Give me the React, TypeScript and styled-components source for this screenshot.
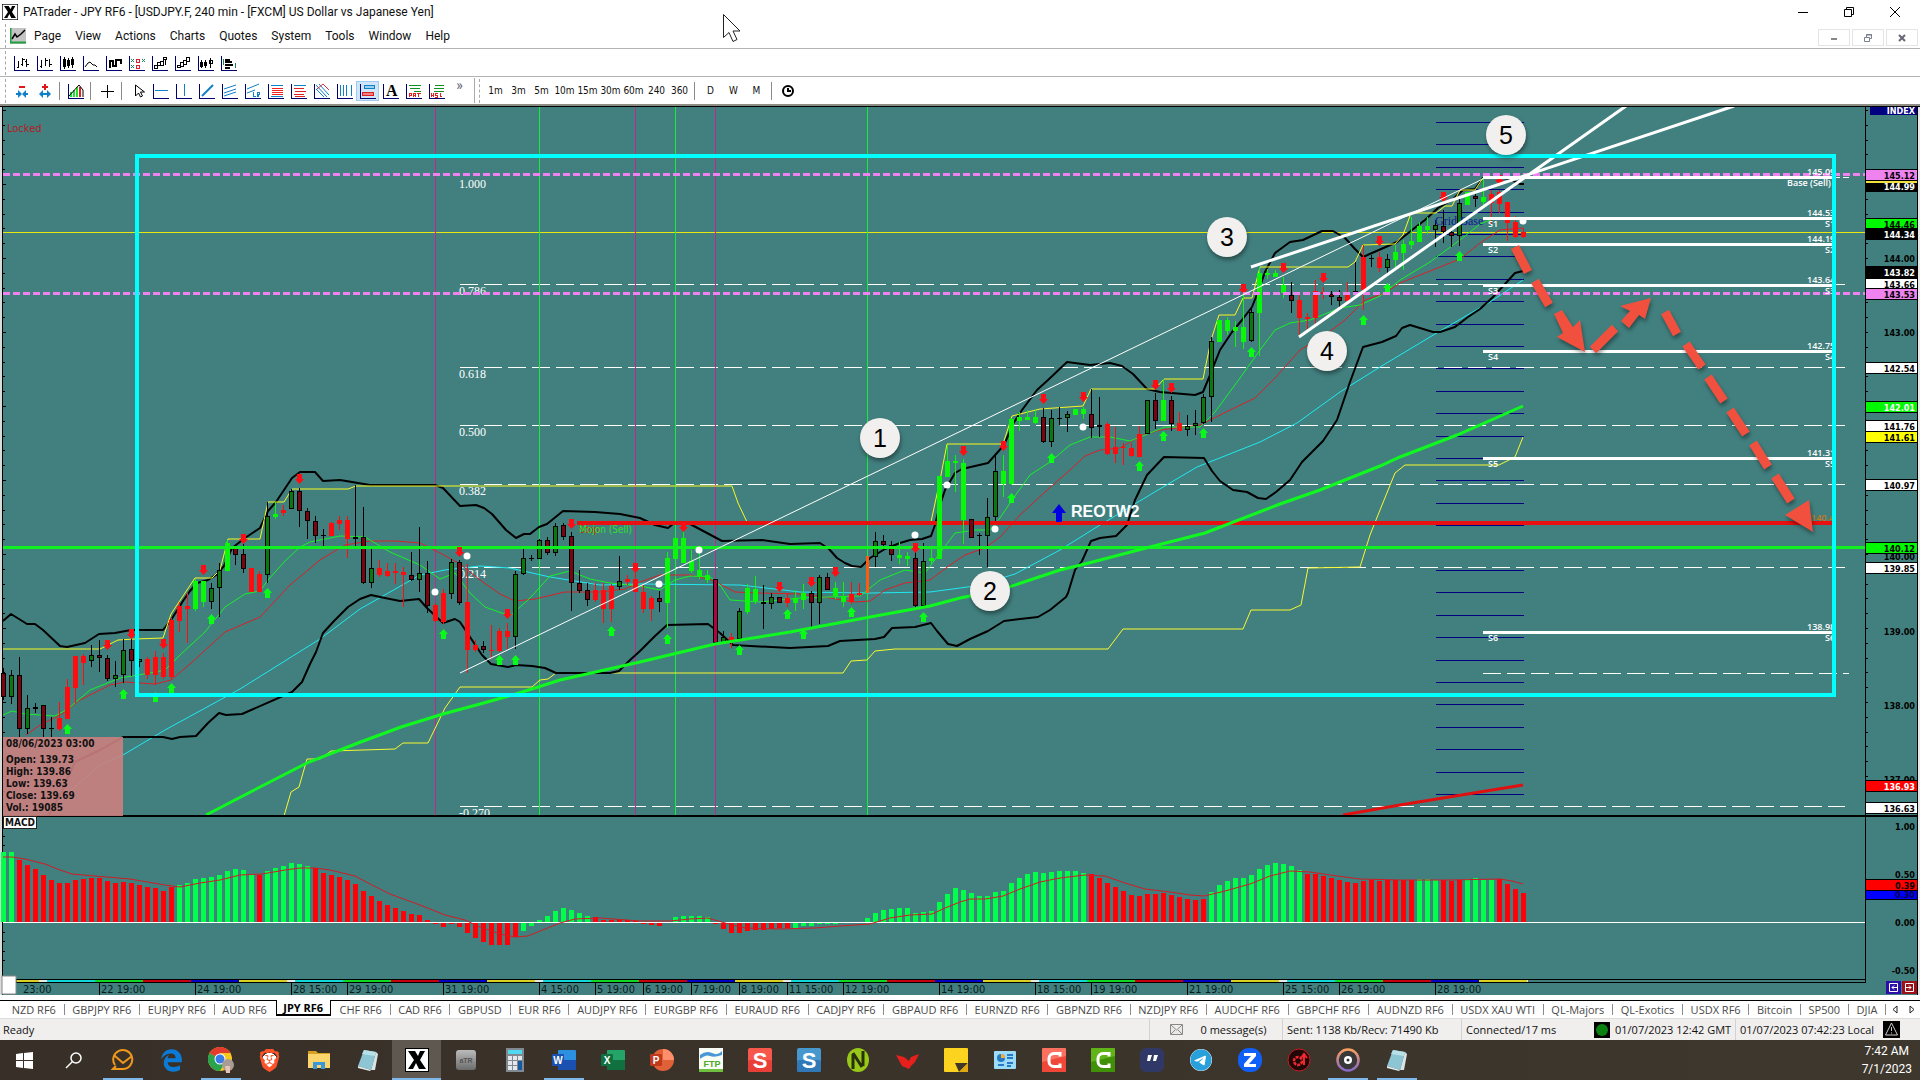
import React from "react";
import styled, { createGlobalStyle } from "styled-components";
import { FaEdgeLegacy, FaTelegram } from "react-icons/fa6";
import { SiBrave } from "react-icons/si";

const UI = `Roboto, "Open Sans", sans-serif`;
const NARROW = `"Open Sans", "Noto Sans", sans-serif`;
const CHART = `"DejaVu Sans Condensed", "DejaVu Sans", sans-serif`;
const TEAL = "#42807f";

const GlobalStyle = createGlobalStyle`
  * { box-sizing: border-box; }
  html, body { margin: 0; padding: 0; background: #fff; }
  body { font-family: ${UI}; font-size: 12px; color: #111; overflow: hidden; }
  button { font: inherit; color: inherit; background: none; border: 0; padding: 0; }
  svg { display: block; }
`;

/* ---------- layout ---------- */
const Screen = styled.div`
  display: flex;
  flex-direction: column;
  min-height: 100vh;
  background: #fff;
`;
const TitleBar = styled.header`
  display: flex;
  align-items: center;
  height: 24px;
  padding-left: 2px;
`;
const Title = styled.h1`
  flex: 1;
  margin: 0 0 0 5px;
  font-size: 12px;
  line-height: 24px;
  font-weight: 400;
`;
const WindowButtons = styled.div`
  display: flex;
  padding-right: 2px;
`;
const WindowButton = styled.button`
  display: grid;
  place-items: center;
  width: 46px;
  height: 20px;
`;
const MenuBar = styled.nav`
  display: flex;
  align-items: center;
  height: 24px;
  padding-left: 5px;
`;
const MenuIcon = styled.svg`
  flex: none;
  margin-right: 1px;
`;
const MenuItem = styled.button`
  padding: 0 7px;
  line-height: 22px;
`;
const Spacer = styled.div`
  flex: 1;
`;
const ChildButton = styled.button`
  display: grid;
  place-items: center;
  width: 32px;
  height: 17px;
  margin: 3px 2px 0 0;
  border: 1px solid #e4e4e4;
`;
const ToolBar = styled.div<{ $last?: boolean }>`
  display: flex;
  align-items: center;
  height: ${(p) => (p.$last ? 30 : 28)}px;
  padding-left: 5px;
  border-top: 1px solid #b4b4b4;
  border-bottom: ${(p) => (p.$last ? "2px solid #8d8d86" : "0")};
`;
const Grip = styled.span`
  width: 0;
  height: 24px;
  margin-right: 4px;
  border-left: 1px dashed #a8a8a8;
`;
const Tool = styled.button<{ $on?: boolean }>`
  display: grid;
  place-items: center;
  width: 23px;
  height: 20px;
  background: ${(p) => (p.$on ? "#cfe6fa" : "transparent")};
  outline: ${(p) => (p.$on ? "1px solid #9fcbf0" : "0")};
  outline-offset: -1px;
`;
const Period = styled(Tool)`
  font-family: ${CHART};
  font-size: 10px;
  white-space: nowrap;
`;
const Divider = styled.span`
  width: 1px;
  height: 18px;
  margin: 0 4px 0 3px;
  background: #8a8a8a;
`;
const More = styled(Tool)`
  height: 24px;
  place-items: start center;
  color: #667;
  font-size: 14px;
  line-height: 12px;
`;
const ToolEnd = styled.span`
  width: 1px;
  height: 25px;
  margin: 0 4px 0 3px;
  background: #aaa;
`;
const ChartRow = styled.main`
  display: flex;
  background: ${TEAL};
  border-top: 1px solid #000;
`;
const Panes = styled.div`
  position: relative;
  flex: 1;
  min-width: 0;
  overflow: hidden;
`;
const AxisColumn = styled.div`
  flex: none;
  width: 55px;
`;
const InfoBox = styled.dl`
  position: absolute;
  left: 3px;
  top: 630px;
  width: 120px;
  height: 79px;
  margin: 0;
  padding: 1px 3px;
  background: rgba(204, 128, 128, 0.9);
  font: bold 10px/12px ${CHART};
  white-space: nowrap;
`;
const InfoDate = styled.dt`
  margin-bottom: 4px;
`;
const InfoLine = styled.dd`
  margin: 0;
`;
const MacdTag = styled.span`
  position: absolute;
  left: 3px;
  top: 709px;
  height: 13px;
  padding: 0 1px;
  background: #fff;
  border: 1px solid #222;
  font: bold 10px/11px ${CHART};
`;
const TabBar = styled.nav`
  display: flex;
  height: 18px;
  margin-top: 5px;
  border-top: 1px solid #000;
  color: #4a4a4a;
  font-family: ${NARROW};
  font-size: 11px;
  padding: 0 0 0 4px;
`;
const Tab = styled.button<{ $on?: boolean }>`
  display: flex;
  flex: 1 1 auto;
  align-items: center;
  justify-content: center;
  height: 16px;
  margin-top: ${(p) => (p.$on ? "-1px" : "0")};
  white-space: nowrap;
  font-weight: ${(p) => (p.$on ? 700 : 400)};
  color: ${(p) => (p.$on ? "#000" : "#4a4a4a")};
  background: #fff;
  border: 1px solid transparent;
  border-width: 0 1px;
  ${(p) => p.$on && "border-color: #000; border-bottom: 2px solid #000;"}
`;
const TabRule = styled.span<{ $hide?: boolean }>`
  width: 1px;
  height: 11px;
  margin-top: 3px;
  background: ${(p) => (p.$hide ? "transparent" : "#8a8a8a")};
`;
const TabScroll = styled.button`
  display: grid;
  place-items: center;
  width: 17px;
  height: 17px;
`;
const StatusBar = styled.footer`
  display: flex;
  align-items: stretch;
  height: 22px;
  background: #f0efee;
  border-top: 1px solid #dcdcdc;
  font-family: ${NARROW};
  font-size: 11px;
  line-height: 22px;
`;
const StatusCell = styled.div<{ $w?: number; $center?: boolean; $plain?: boolean }>`
  display: flex;
  align-items: center;
  justify-content: ${(p) => (p.$center ? "center" : "flex-start")};
  gap: 18px;
  ${(p) => (p.$w ? `width: ${p.$w}px;` : "flex: 1;")}
  padding-left: ${(p) => (p.$plain ? 2 : 4)}px;
  white-space: nowrap;
  border-left: 1px solid ${(p) => (p.$plain ? "transparent" : "#d2d2d2")};
`;
const TaskBar = styled.footer`
  display: flex;
  height: 40px;
  background: linear-gradient(90deg, #383028, #3e372d);
  color: #fff;
`;
const Task = styled.button<{ $open?: boolean; $active?: boolean }>`
  position: relative;
  display: grid;
  place-items: center;
  width: 49px;
  height: 40px;
  background: ${(p) => (p.$active ? "#5f5851" : "transparent")};
  &::after {
    content: "";
    position: absolute;
    left: ${(p) => (p.$active ? 0 : 5)}px;
    right: ${(p) => (p.$active ? 0 : 4)}px;
    bottom: 0;
    height: ${(p) => (p.$open || p.$active ? 2 : 0)}px;
    background: #7fb8ea;
  }
`;
const Clock = styled.time`
  display: flex;
  flex-direction: column;
  align-items: center;
  margin-left: auto;
  padding: 2px 8px 0 0;
  line-height: 18px;
`;

/* ---------- market data ----------
   One row per bar: kind, high, body top, body bottom, low (plot pixels).
   R/G solid trend bars, M/D/C outlined bars, O narrow signal bar. */
const CANDLES = `M 668 673 697 700|D 670 675 697 704|M 657 675 729 737|D 695 708 729 734|M 703 707 709 713|M 705 705 729 737|M 717 728 729 737|R 702 718 729 731|R 679 687 719 719|R 656 656 688 703|R 654 656 663 685|D 645 655 661 667|M 640 655 658 672|M 655 658 679 681|D 661 675 679 687|D 639 650 675 683|M 639 649 661 676|D 659 659 662 667|R 657 659 675 679|R 651 657 675 685|R 653 657 677 679|R 618 620 677 679|R 602 606 621 632|R 593 606 609 643|G 579 581 609 611|G 581 581 602 607|D 583 588 602 609|D 563 570 588 617|G 540 543 571 571|M 546 546 555 565|M 544 554 569 573|R 568 568 592 592|R 571 574 592 592|D 502 516 575 583|G 502 514 517 519|R 505 510 513 516|D 489 491 509 509|M 488 491 511 527|M 508 511 521 539|M 516 521 536 543|M 529 535 536 547|R 522 523 536 536|R 516 520 524 530|R 516 520 539 558|M 485 537 539 546|M 507 537 583 584|D 546 568 583 588|R 560 568 575 577|R 563 571 576 577|R 563 571 573 584|R 567 572 575 607|M 552 575 580 581|D 527 573 580 592|M 561 573 606 613|R 603 605 621 622|R 589 593 622 624|D 559 562 594 599|M 560 562 603 605|R 564 602 650 673|R 640 645 650 652|M 641 646 650 653|R 625 650 651 659|R 628 631 651 652|R 623 631 637 649|D 571 574 637 649|D 549 558 574 575|M 555 558 559 561|D 539 540 559 559|M 537 540 553 555|D 523 526 553 556|M 523 525 537 540|M 532 536 583 611|M 570 583 591 593|M 583 590 600 606|R 583 590 600 602|R 583 590 609 623|R 584 586 609 622|D 556 581 587 590|R 575 579 582 585|R 569 579 592 592|R 585 592 609 613|R 596 598 609 621|M 591 598 602 612|G 552 558 603 628|G 538 538 559 559|G 531 538 563 563|G 550 561 571 573|G 550 570 577 579|G 570 575 580 583|C 579 579 643 643|D 631 637 643 644|R 633 637 640 648|D 608 611 639 640|G 584 588 612 614|G 576 589 601 604|M 585 602 604 629|D 593 597 604 609|M 597 597 603 603|R 593 598 603 607|G 590 598 603 611|G 584 593 600 609|M 591 593 603 627|D 575 577 603 624|M 573 577 590 590|G 582 588 596 599|G 582 596 602 607|R 582 594 602 604|R 583 593 595 596|O 556 556 593 593|D 532 541 557 567|M 535 541 545 546|M 541 545 555 561|G 542 555 558 564|G 552 556 559 566|M 550 558 606 610|D 543 561 606 607|G 549 558 561 565|G 476 476 559 559|G 445 461 477 477|G 455 461 463 492|G 459 463 520 544|M 519 519 538 538|M 533 535 536 555|D 498 517 536 567|D 455 471 517 521|G 455 471 484 497|G 418 419 484 485|G 412 417 421 431|G 410 417 420 420|G 410 417 423 424|M 408 417 442 443|D 410 418 442 447|M 407 418 419 425|D 411 414 418 432|G 409 409 415 415|G 407 409 414 419|M 389 414 428 438|D 397 425 427 437|R 422 424 454 455|R 427 447 454 463|R 443 447 448 465|R 443 448 456 457|R 426 434 457 457|D 400 400 434 434|M 393 400 421 429|G 379 400 421 421|M 396 400 424 431|R 412 423 431 431|D 415 426 430 436|D 410 423 426 435|D 394 397 423 424|D 337 341 397 422|G 320 320 342 342|G 317 320 331 335|G 321 327 331 347|G 293 327 342 349|D 307 312 341 342|G 267 273 313 356|G 269 273 275 279|G 270 273 277 277|G 277 285 293 298|M 282 295 301 313|R 293 300 318 337|R 313 317 319 330|R 280 291 318 324|R 287 292 294 299|M 291 294 297 305|M 290 297 301 307|R 282 292 301 302|M 262 291 293 295|R 245 257 290 310|M 255 258 259 267|R 252 257 268 272|D 254 259 268 273|G 245 252 260 267|G 240 244 253 270|G 217 241 245 249|G 222 226 242 242|G 217 226 230 234|D 220 225 230 247|M 210 226 232 243|M 227 232 236 247|D 197 203 236 246|G 192 192 205 205|M 193 196 199 207|G 177 197 202 205|R 190 194 203 225|R 190 192 204 213|R 202 202 223 241|R 216 222 237 238|R 228 232 237 238`
  .split("|")
  .map((row) => {
    const [kind, ...n] = row.split(" ");
    return { kind, v: n.map(Number) };
  });

const CANDLE_FILL: Record<string, string> = {
  R: "#ff0c10", G: "#08f808", M: "#7c0410", D: "#0a7a10", O: "#ff5a10", C: "#b00440",
};

/* MACD histogram, height in thirds of a pixel above the zero line; "r"/"g" switches colour. */
const MACD = `g 211 209 r 187 172 160 142 127 117 117 127 130 133 133 124 118 120 118 112 106 103 94 104 g 112 118 130 133 136 142 154 160 157 145 r 142 g 154 163 169 178 175 169 r 163 148 142 136 127 115 94 79 64 52 43 34 25 22 7 -7 -14 -5 -14 -32 -47 -59 -68 -68 -68 -46 g -28 -11 7 19 34 43 37 28 19 r 14 7 7 7 7 4 -5 -8 -11 -2 g 16 19 19 19 16 r -5 -20 -32 -32 -26 -23 -23 -20 -18 -18 g -17 -11 -11 -5 -5 -5 -3 -3 -2 13 28 37 40 43 43 28 29 34 61 85 103 97 88 79 79 91 94 118 133 145 151 148 151 154 154 154 148 r 145 133 118 106 94 82 79 85 85 88 82 76 70 67 70 g 91 112 124 133 133 142 160 172 178 175 169 157 r 145 145 139 133 127 121 118 124 127 124 127 127 127 127 g 130 130 127 r 127 123 127 g 130 133 127 127 r 130 115 100 88`;
const macdBars: { c: string; h: number }[] = [];
{
  let c = "#00ff48";
  MACD.split(" ").forEach((t) => {
    if (t === "g") c = "#00ff48";
    else if (t === "r") c = "#ff0008";
    else macdBars.push({ c, h: Number(t) / 3 });
  });
}
const MACD_SIGNAL =
  "3,857 12,857 25,859 45,864 60,870 72,874 95,876 130,879 165,885 180,887 200,883 220,880 240,875 262,874 285,870 300,868 315,868 330,870 355,876 370,884 390,894 420,905 445,915 465,920 480,927 500,934 515,937 528,936 545,929 560,923 575,919 600,918 640,921 670,921 690,919 708,918 725,923 745,928 780,929 815,928 840,926 870,924 890,918 910,915 932,914 945,908 960,902 970,899 985,899 1003,896 1020,889 1040,882 1060,878 1085,875 1105,876 1125,883 1145,889 1170,892 1190,895 1204,896 1225,891 1250,884 1270,876 1290,871 1310,872 1330,875 1360,879 1400,880 1450,880 1500,879 1512,881 1523,884";

const BAND_TOP =
  "3,621 11,614 27,624 35,624 43,630 60,646 67,647 85,643 99,634 115,633 131,630 163,630 171,620 183,601 190,591 197,583 208,580 216,575 224,566 232,548 245,538 260,528 268,511 276,502 292,478 300,472 315,472 323,481 340,480 352,482 370,485 435,485 443,488 460,506 476,505 484,508 492,514 506,530 516,538 524,534 530,534 539,527 547,524 563,511 595,512 620,514 640,518 655,525 668,528 673,524 690,524 707,533 722,541 762,540 790,544 820,543 829,549 837,558 845,563 852,566 861,567 870,558 885,549 900,543 910,540 922,539 931,536 935,525 940,505 945,490 955,473 962,469 975,466 988,463 997,453 1004,445 1013,424 1022,410 1037,390 1048,380 1067,362 1090,365 1110,363 1122,366 1133,374 1147,389 1160,392 1195,395 1203,392 1210,375 1220,350 1232,332 1242,320 1252,307 1258,292 1265,272 1275,253 1290,242 1303,240 1322,231 1333,231 1345,238 1355,249 1363,257 1372,253 1388,246 1397,242 1412,230 1425,220 1438,208 1452,200 1463,190 1475,189 1483,178 1495,177 1510,179 1520,184 1524,184";
const BAND_LOW =
  "49,815 60,795 75,762 100,750 123,737 163,737 172,739 180,737 196,736 208,723 219,713 226,715 242,714 292,692 302,682 310,664 316,652 323,633 334,621 348,607 360,599 371,595 385,598 400,601 419,599 427,608 443,623 455,619 460,622 468,634 482,655 491,664 508,667 516,665 532,666 545,668 556,673 610,673 619,671 629,661 640,651 655,636 667,625 708,624 720,633 733,645 790,648 828,646 840,641 875,639 884,637 892,628 915,627 931,623 937,631 948,644 957,646 970,639 988,631 1004,621 1020,619 1038,617 1050,610 1066,597 1068,593 1075,570 1082,561 1091,541 1100,538 1116,536 1127,525 1135,500 1147,475 1164,457 1204,458 1212,471 1220,481 1233,490 1247,492 1258,498 1266,499 1276,492 1290,480 1302,462 1323,441 1337,420 1350,382 1363,347 1382,342 1396,336 1402,328 1410,325 1433,332 1440,332 1455,327 1468,317 1480,309 1493,297 1505,284 1515,273 1523,271";
const CHANNEL_TOP =
  "3,649 100,649 118,640 135,639 163,638 171,614 195,578 212,578 220,570 228,539 260,539 268,502 284,502 292,489 348,489 356,486 732,486 738,503 747,522 931,522 940,480 947,444 1003,444 1012,416 1040,409 1083,406 1091,389 1155,389 1164,379 1203,379 1211,340 1219,315 1235,315 1243,298 1252,298 1260,267 1348,267 1355,262 1363,245 1395,244 1403,235 1411,213 1436,213 1445,206 1452,206 1460,190 1475,190 1483,178 1510,178";
const CHANNEL_LOW =
  "284,816 291,792 299,787 307,759 320,759 331,751 395,749 403,743 428,743 445,708 460,687 532,687 540,680 548,679 556,673 843,673 851,661 867,660 875,651 895,649 1108,649 1123,629 1243,629 1251,610 1290,610 1301,605 1308,568 1360,567 1370,535 1380,510 1395,473 1405,465 1499,465 1515,457 1523,437";
const MA_SLOW =
  "206,815 260,787 309,762 358,743 401,727 443,714 480,704 516,694 560,680 600,671 640,662 715,644 790,632 870,617 930,606 960,598 1000,590 1060,570 1081,565 1146,548 1205,533 1280,504 1320,490 1380,466 1400,457 1457,435 1523,406";
const MA_CYAN =
  "40,815 60,800 100,765 123,755 165,730 240,689 320,639 360,609 420,575 445,570 480,566 510,568 550,577 600,585 640,584 740,585 800,592 870,593 930,592 975,586 1015,574 1060,550 1100,525 1158,490 1197,467 1260,442 1297,423 1340,392 1380,367 1400,355 1440,331 1490,302 1523,280";
const MA_RED =
  "26,735 40,725 62,714 80,700 110,685 125,682 155,684 171,680 190,664 225,632 260,617 290,585 320,560 345,545 370,541 395,541 420,543 440,553 460,564 480,580 500,594 515,601 535,599 565,592 600,592 625,589 640,582 660,575 690,575 712,580 735,592 760,593 800,594 830,598 855,602 870,601 885,590 905,583 930,580 950,565 965,555 985,548 1000,537 1020,515 1045,492 1070,470 1085,456 1100,450 1120,448 1140,436 1160,430 1200,425 1230,410 1255,398 1275,378 1300,350 1325,335 1345,320 1365,300 1385,293 1400,283 1420,275 1440,267 1460,259 1480,243 1500,230 1523,228";
const MA_GREEN =
  "3,715 12,711 25,714 55,716 68,709 90,690 120,678 150,673 165,670 180,655 205,632 225,607 245,594 260,591 268,580 285,561 300,547 310,542 340,536 365,537 390,552 420,565 440,579 455,573 470,593 485,607 510,616 530,598 550,576 570,571 590,579 610,583 640,586 660,590 675,580 690,576 710,577 720,585 730,600 760,602 800,598 830,597 860,596 880,580 905,570 925,573 940,553 955,533 975,530 990,530 1000,518 1012,500 1030,475 1050,462 1070,445 1090,437 1110,437 1130,441 1145,435 1165,427 1200,427 1215,412 1240,378 1260,350 1275,330 1290,323 1310,320 1340,308 1360,305 1380,296 1400,280 1430,262 1460,240 1480,224 1495,218 1523,220";

const DOWN = [[107,645],[131,634],[163,644],[203,570],[243,539],[299,479],[459,552],[507,614],[571,524],[635,568],[683,527],[779,587],[811,582],[835,572],[915,548],[963,451],[1003,446],[1043,399],[1083,397],[1155,385],[1171,388],[1243,289],[1283,268],[1323,278],[1379,241],[1443,197],[1499,180]];
const UP = [[67,729],[123,694],[155,697],[171,688],[211,619],[267,593],[443,634],[499,660],[515,660],[611,631],[667,639],[739,650],[787,614],[803,634],[851,612],[923,617],[1011,498],[1051,458],[1163,436],[1203,433],[1139,466],[1251,352],[1363,320],[1387,288],[1459,256]];
const DOTS = [[467,556],[435,592],[659,584],[699,550],[915,535],[947,485],[995,529],[1083,427],[1523,221]];
const FIBS: [string, number][] = [["1.000", 177],["0.786", 284],["0.618", 367],["0.500", 425],["0.382", 484],["0.214", 567],["-0.270", 806]];
const PIVOTS: [string, string, number][] = [["", "145.09", 177],["S1", "144.53", 218],["S2", "144.19", 244],["S3", "143.64", 285],["S4", "142.75", 351],["S5", "141.31", 458],["S6", "138.98", 632]];
const BADGES = [[880,438],[990,591],[1227,237],[1327,351],[1506,135]];
const DASHES = [
  [1515,247,1528,272],[1535,281,1549,305],[1593,350,1615,328],[1665,312,1677,334],
  [1686,344,1702,367],[1708,377,1724,401],[1730,410,1746,434],[1753,443,1768,467],[1775,476,1791,501],
];

function PricePane() {
  return (
    <svg width="100%" height="711" role="img" aria-label="USDJPY price chart">
      <g transform="translate(0 -107)">
        <g shapeRendering="crispEdges">
          <rect x="0" y="107" width="2" height="711" fill="#d8dcda" />
          <rect x="2" y="107" width="1" height="711" fill="#000" />
          {Array.from({ length: 48 }, (_, i) => (
            <rect key={i} x="3" y={Math.round(110 + i * 14.8)} width={i % 5 === 0 ? 3 : 2} height="1" />
          ))}
          <rect x="3" y="232" width="1862" height="1" fill="#e8e810" />
          {FIBS.slice(1).map(([n, y]) => (
            <line key={n} x1="460" x2="1845" y1={y + 0.5} y2={y + 0.5} stroke="#fff" strokeDasharray="18 6" />
          ))}
          <line x1="1483" x2="1849" y1="673.5" y2="673.5" stroke="#fff" strokeDasharray="18 6" />
          <line x1="1834" x2="1849" y1="177.5" y2="177.5" stroke="#fff" strokeDasharray="6 3" />
          {[435, 635, 715].map((x) => <rect key={x} x={x} y="107" width="1" height="709" fill="#c02890" />)}
          {[539, 675, 867].map((x) => <rect key={x} x={x} y="107" width="1" height="709" fill="#10f038" />)}
          {Array.from({ length: 31 }, (_, i) => (
            <rect key={i} x="1436" y={Math.round(122 + i * 22.4)} width="88" height="1" fill="#000080" />
          ))}
        </g>
        <g fontFamily="Liberation Serif, serif" fontSize="12" fill="#fff">
          {FIBS.map(([n, y]) => <text key={n} x="459" y={y + 11}>{n}</text>)}
        </g>
        <g fill="none" strokeLinejoin="round">
          <polyline points={MA_CYAN} stroke="#20e8f0" />
          <polyline points={MA_RED} stroke="#d82028" />
          <polyline points={MA_GREEN} stroke="#18f028" />
          <polyline points={CHANNEL_LOW} stroke="#f8f830" />
          <polyline points={BAND_LOW} stroke="#000" strokeWidth="2" />
          <polyline points={BAND_TOP} stroke="#000" strokeWidth="2" />
          <polyline points={CHANNEL_TOP} stroke="#f8f820" />
          <polyline points="1343,815 1400,805 1523,785" stroke="#e01010" strokeWidth="3" />
        </g>
        <g shapeRendering="crispEdges">
          <rect x="577" y="521" width="1257" height="4" fill="#e81010" />
          {CANDLES.map(({ kind, v: [hi, top, bot, lo] }, i) => {
            const x = 3 + i * 8;
            const outlined = "MDC".includes(kind);
            const half = kind === "O" ? 1 : 2;
            const fill = CANDLE_FILL[kind];
            const h = Math.max(bot - top, 1);
            return (
              <g key={i}>
                <rect x={x} y={hi} width="1" height={lo - hi} fill={outlined ? "#000" : fill} />
                <rect x={x - half} y={top} width={half * 2 + 1} height={h} fill={outlined ? "#000" : fill} />
                {outlined && h > 2 && <rect x={x - 1} y={top + 1} width="3" height={h - 2} fill={fill} />}
              </g>
            );
          })}
          <rect x="3" y="546" width="1862" height="3" fill="#10f020" />
        </g>
        <polyline points={MA_SLOW} fill="none" stroke="#10f820" strokeWidth="3" />
        {DOWN.map(([x, y]) => (
          <path key={x} d={`M${x - 2} ${y - 5}h5v5h2l-4.500 5l-4.500 -5h2z`} fill="#ff0c14" />
        ))}
        {UP.map(([x, y]) => (
          <path key={x} d={`M${x - 2} ${y + 5}h5v-5h2l-4.500 -5l-4.500 5h2z`} fill="#08fc18" />
        ))}
        {DOTS.map(([x, y]) => <circle key={x} cx={x} cy={y} r="3.500" fill="#fff" />)}
        <g fontFamily={CHART} fontSize="10">
          <text x="579" y="533" fill="#d02018">Stop</text>
          <text x="579" y="533" fill="#30e030">Mojon (Sell)</text>
          <text x="7" y="132" fontSize="11" fill="#b01c24">Locked</text>
        </g>
        <text x="1435" y="225" fontFamily="Liberation Serif, serif" fontSize="12" fill="#101890">Grid Base</text>
        <g shapeRendering="crispEdges">
          {PIVOTS.map(([, , y]) => <rect key={y} x="1483" y={y - 1} width="351" height="3" fill="#fff" />)}
          {[174, 293].map((y) => (
            <line key={y} x1="3" x2="1865" y1={y + 0.5} y2={y + 0.5} stroke="#ee82ee" strokeWidth="3" strokeDasharray="7 3" />
          ))}
        </g>
        <clipPath id="inside"><rect x="1400" y="107" width="433" height="709" /></clipPath>
        <g clipPath="url(#inside)" fontFamily="Open Sans, sans-serif" fontWeight="600" fontSize="9" fill="#fff">
          {PIVOTS.map(([s, p, y]) => (
            <g key={y}>
              <text x="1807" y={y - 2}>{p}</text>
              <text x="1488" y={y + 9}>{s}</text>
              <text x="1825" y={y + 9}>{s}</text>
            </g>
          ))}
          <text x="1787" y="186">Base (Sell)</text>
          <text x="1811" y="521" fill="#c87818">140.45</text>
        </g>
        <g stroke="#fff" fill="none">
          <path d="M460 673L1487 177" strokeWidth="1" />
          <path d="M1251 267L1734 106M1299 337L1626 106" strokeWidth="3" />
        </g>
        <rect x="137" y="156" width="1697" height="539" fill="none" stroke="#00ffff" strokeWidth="4" />
        <path d="M1059 504l7 9h-4v9h-6v-9h-4z" fill="#0000e0" />
        <text x="1071" y="517" fontFamily="Liberation Sans, sans-serif" fontWeight="700" fontSize="16" fill="#fff">REOTW2</text>
        <g style={{ filter: "drop-shadow(1px 3px 2px rgba(0,0,0,.4))" }}>
          <g stroke="#f2503e" strokeWidth="9">
            {DASHES.map(([a, b, c, d]) => <line key={a} x1={a} y1={b} x2={c} y2={d} />)}
          </g>
          <g fill="#f2503e">
            <path d="M1585 352L1557 337L1563 333L1554 314L1562 310L1573 327L1580 320Z" />
            <path d="M1651 298L1645 319L1639 315L1629 328L1621 321L1630 311L1620 306Z" />
            <path d="M1813 532L1785 515L1809 500Z" />
          </g>
          {BADGES.map(([x, y]) => <circle key={x} cx={x} cy={y} r="20" fill="#f1f0ee" />)}
        </g>
        <g fontFamily="Liberation Sans, sans-serif" fontSize="25" textAnchor="middle" fill="#000">
          {BADGES.map(([x, y], i) => <text key={x} x={x} y={y + 9}>{i + 1}</text>)}
        </g>
        <rect x="2" y="815" width="100%" height="2" />
      </g>
    </svg>
  );
}

const WEEK: [string, number][] = [["#d8d020", 48],["#e8e8e8", 8],["#10d8d8", 48],["#10d820", 48],["#c80010", 48],["#0000c8", 48]];
const SESSIONS: { x: number; w: number; c: string }[] = [];
for (let x = -9, i = 0; x < 1528; i++) {
  const [c, w] = WEEK[i % 6];
  SESSIONS.push({ x: Math.max(x, 17), w: Math.min(x + w, 1528) - Math.max(x, 17), c });
  x += w;
}
const TIMES: [number, string][] = [[99,"22 19:00"],[195,"24 19:00"],[291,"28 15:00"],[347,"29 19:00"],[443,"31 19:00"],[539,"4 15:00"],[595,"5 19:00"],[643,"6 19:00"],[691,"7 19:00"],[739,"8 19:00"],[787,"11 15:00"],[843,"12 19:00"],[939,"14 19:00"],[1035,"18 15:00"],[1091,"19 19:00"],[1187,"21 19:00"],[1283,"25 15:00"],[1339,"26 19:00"],[1435,"28 19:00"]];

function MacdPane() {
  return (
    <svg width="100%" height="177" role="img" aria-label="MACD histogram and time scale">
      <g transform="translate(0 -818)">
        <g shapeRendering="crispEdges">
          <rect x="0" y="818" width="2" height="177" fill="#d8dcda" />
          <rect x="2" y="818" width="1" height="177" />
          {Array.from({ length: 15 }, (_, i) => <rect key={i} x="3" y={Math.round(826 + i * 9.6)} width="2" height="1" />)}
          {macdBars.map(({ c, h }, i) => (
            <rect key={i} x={1 + i * 8} y={Math.round(h > 0 ? 922 - h : 922)} width="5" height={Math.max(1, Math.round(Math.abs(h)))} fill={c} />
          ))}
          <rect x="3" y="922" width="1862" height="1" fill="#fff" />
          <rect x="3" y="979" width="1862" height="1" />
          {SESSIONS.map(({ x, w, c }) => <rect key={x} x={x} y="980" width={w} height="2" fill={c} />)}
          <rect x="3" y="982" width="1862" height="1" />
          {TIMES.map(([x]) => <rect key={x} x={x} y="983" width="1" height="12" />)}
        </g>
        <polyline points={MACD_SIGNAL} fill="none" stroke="#d01c24" />
        <g fontFamily={CHART} fontSize="11" fill="#0a1a1a">
          <text x="23" y="993">23:00</text>
          {TIMES.map(([x, t]) => <text key={x} x={x + 2} y="993">{t}</text>)}
        </g>
        <rect x="2" y="976" width="14" height="18" fill="#fff" stroke="#888" />
      </g>
    </svg>
  );
}

/* label, centre y, background, text colour */
const TAGS: [string, number, string?, string?][] = [
  ["144.99", 186, "#000", "#fff"],["145.12", 175, "#ee82ee"],["144.46", 224, "#00f800"],["144.34", 234, "#000", "#fff"],
  ["144.00", 258],["143.82", 272, "#000", "#fff"],["143.66", 284, "#fff"],["143.53", 294, "#ee82ee"],["143.00", 332],
  ["142.54", 368, "#fff"],["142.01", 407, "#00f800", "#fff"],["141.76", 426, "#fff"],["141.61", 437, "#ffff00"],["140.97", 485, "#fff"],
  ["140.00", 556],["140.12", 548, "#00f800"],["139.85", 568, "#fff"],["139.00", 631],["138.00", 705],["137.00", 779],
  ["136.93", 786, "#ff0000", "#fff"],["136.63", 808, "#fff"],["1.00", 826],["0.50", 874],["0.30", 894, "#0000ff", "#000050"],
  ["0.39", 885, "#ff0000"],["0.00", 922],["-0.50", 970],
];

function Axis() {
  return (
    <svg width="100%" height="888" role="img" aria-label="Price scale">
      <g transform="translate(-1865 -107)">
        <g shapeRendering="crispEdges">
          <rect x="1865" y="107" width="1" height="876" />
          <rect x="1917" y="107" width="1" height="888" />
          <rect x="1918" y="107" width="2" height="888" fill="#e8e8e8" />
          <rect x="1865" y="815" width="53" height="2" />
          <rect x="1870" y="107" width="47" height="8" fill="#000080" />
          {Array.from({ length: 48 }, (_, i) => (
            <rect key={i} x="1866" y={Math.round(110 + i * 14.8)} width="2" height="1" />
          ))}
        </g>
        <g fontFamily={CHART} fontWeight="700" fontSize="9" textAnchor="end">
          <text x="1915" y="114" fill="#fff">INDEX</text>
          {TAGS.map(([t, y, bg, fg]) => (
            <g key={t}>
              {bg && <rect x="1865.500" y={y - 5.5} width="52" height="11" fill={bg} stroke="#000" />}
              <text x="1915" y={y + 4} fill={fg ?? "#000"}>{t}</text>
            </g>
          ))}
        </g>
        <rect x="1866" y="181" width="51" height="2" fill="#f0e040" />
        <rect x="1886" y="981" width="15" height="13" fill="#2a10a8" />
        <rect x="1902" y="981" width="15" height="13" fill="#9c1018" />
        <path d="M1889.500 983.500h8v8h-8zM1905.500 983.500h8v8h-8zM1892 987.500h5M1894 985.500l-2 2l2 2M1906 987.500h5M1909 985.500l2 2l-2 2" fill="none" stroke="#fff" />
      </g>
    </svg>
  );
}

/* ---------- toolbar glyphs ---------- */
const NAVY = "#000070";
const BLUE = "#1080c8";
function Glyph({ children, axes = true }: { children: React.ReactNode; axes?: boolean }) {
  return (
    <svg width="16" height="16" viewBox="0 0 16 16" fill="none" stroke="#000" shapeRendering="crispEdges">
      {axes && <path d="M.5 1v14.500H16" stroke={NAVY} />}
      {children}
    </svg>
  );
}
const CHART_TYPES: [string, React.ReactNode][] = [
  ["Bars", <path key="a" d="M4.500 6v7M3 12.500h2M8.500 3v8M7 9.500h2M8.500 4.500h2M12.500 4v8M11 6.500h2M12.500 9.500h2" />],
  ["High low bars", <path key="a" d="M4.500 5v8M3 11.500h2M8.500 3v8M8.500 5.500h2M12.500 4v8M12.500 9.500h2" />],
  ["Candles", <path key="a" d="M3.500 4.500h2v7h-2zM4.500 2v12M7.500 5.500h2v5h-2zM8.500 3v10M12.500 2v11M11.500 4v6M13.500 4v6" />],
  ["Line", <path key="a" d="M2 12l3-4l2-1l3 3l2 0l2 2" shapeRendering="auto" />],
  ["Step line", <path key="a" d="M3.500 13V5.500h3v5h3v-6h5v4" strokeWidth="2" />],
  ["Point and figure", <path key="a" d="M2 4l3 3m0-3l-3 3M2 10l3 3m0-3l-3 3M13 4l3 3m0-3l-3 3" stroke="#108858" />],
  ["Renko", <path key="a" d="M2.500 10.500h3v3h-3zM5.500 7.500h3v3h-3zM8.500 6.500v4h3v-6h3v-2h-3v4h-3zM11.500 4.500h2v5" />],
  ["Range bars", <path key="a" d="M2.500 10.500h3v2h-3zM5.500 7.500h3v4h-3zM8.500 5.500h3v4h-3zM11.500 2.500h3v4h-3z" />],
  ["Heikin", <path key="a" d="M2.500 7.500h2v4h-2zM3.500 5v8M7.500 5v8M6.500 7v4M8.500 7v4M12.500 3v10M11.500 5.500h3v3h-3z" />],
  ["Profile", <g key="a"><path d="M2.500 4v6M14.500 8v5" stroke="#108858" /><path d="M4 4.500h5M4 7h7M4 9.500h8M4 12.500h5" strokeWidth="2" /></g>],
];
const DRAWING_TOOLS: [string, React.ReactNode][] = [
  ["Horizontal line", <path key="a" d="M2 7.500h13" stroke={BLUE} />],
  ["Vertical line", <path key="a" d="M8.500 1v12" stroke={BLUE} />],
  ["Trend line", <path key="a" d="M3 13L14 2" stroke={BLUE} strokeWidth="2" shapeRendering="auto" />],
  ["Channel", <path key="a" d="M2 6l12-4M2 10l12-4M2 13l12-4" stroke={BLUE} shapeRendering="auto" />],
  ["Regression", <g key="a"><path d="M2 6l12-5M2 10l8-3" stroke={BLUE} shapeRendering="auto" /><path d="M8.500 9v4.500h2M12.500 14v-4.500h2v2h-2l2 3" stroke={BLUE} /></g>],
  ["Fib retracement", <g key="a"><path d="M3 2.500h12M3 13.500h12" stroke={BLUE} /><path d="M4 5.500h11M4 7.500h11M4 9.500h11M4 11.500h11" stroke="#f02020" /></g>],
  ["Fib extension", <g key="a"><path d="M3 2.500h12" stroke={BLUE} /><path d="M3 5.500h10M4 8.500h11M3 11.500h10M4 13.500h10" stroke="#e02020" /></g>],
  ["Pitchfork", <g key="a" shapeRendering="auto"><path d="M2 2l11 12M5 1l10 11M2 6l8 8" stroke={BLUE} /><path d="M3 6l6-5l6 6" stroke="#d03040" /></g>],
  ["Time zones", <path key="a" d="M3.500 2v11M6.500 2v11M9.500 2v11M14.500 2v11" stroke={BLUE} />],
  ["Supply zone", <g key="a"><rect x="4.500" y="2.500" width="10" height="3" stroke={BLUE} fill="#9cd0f0" /><rect x="2.500" y="9.500" width="11" height="3" stroke="#e02020" fill="#f08080" /></g>],
  ["Text", <text key="a" x="3" y="13" fontFamily="Liberation Serif, serif" fontWeight="700" fontSize="16" fill="#000" stroke="none">A</text>],
  ["Pattern", <g key="a"><path d="M3 2.500h12M4 5.500h10M8 8.500h7" stroke="#109020" /><path d="M3.500 14v-4h2v2h-2M7.500 14v-4h2v4M7.500 12h2M11 10.500h4M12.500 10v4" stroke="#e02020" /></g>],
  ["High low", <g key="a"><path d="M6 2.500h9M5 5.500h10M5 8.500h10" stroke="#109020" /><path d="M2.500 10v4M4.500 10v4M2.500 12h2M9 10.500H6.500v2h2v1.500H6M11.500 10v4M11 13.500h2" stroke="#e02020" /></g>],
];
const Stretch = ({ plus }: { plus?: boolean }) => (
  <Glyph axes={false}>
    <path d={plus ? "M8 1v6M5 4h6" : "M5 4h6"} stroke="#e01818" strokeWidth="2" />
    <path
      d={plus ? "M2 11l4-4v3h4v-3l4 4l-4 4v-3h-4v3z" : "M8 11l-4-4v3H2v2h2v3zM8 11l4-4v3h2v2h-2v3z"}
      fill={BLUE} stroke="none" shapeRendering="auto"
    />
  </Glyph>
);

/* ---------- taskbar icons ---------- */
function Square({ c, t, c2 }: { c: string; t: string; c2?: string }) {
  return (
    <svg width="24" height="24" viewBox="0 0 24 24">
      <rect x="0" y="0" width="24" height="24" rx="2" fill={c} />
      <rect x="0" y="12" width="24" height="12" rx="2" fill={c2 ?? c} />
      <text x="12" y="20" textAnchor="middle" fontFamily="Liberation Sans, sans-serif" fontWeight="700" fontSize="22" fill="#fff">{t}</text>
    </svg>
  );
}
function Camtasia({ c, c2 }: { c: string; c2: string }) {
  return (
    <svg width="24" height="24" viewBox="0 0 24 24">
      <rect width="24" height="24" rx="1" fill={c} />
      <path d="M0 14L24 8v16H0z" fill={c2} />
      <path d="M18 8.500V5.500h-6a5 5 0 0 0-5 5v3a5 5 0 0 0 5 5h6v-3" fill="none" stroke="#fff" strokeWidth="3" />
    </svg>
  );
}
function Office({ c, dark, t, round }: { c: string; dark: string; t: string; round?: boolean }) {
  return (
    <svg width="24" height="24" viewBox="0 0 24 24">
      {round ? <circle cx="13" cy="12" r="11" fill={c} /> : <rect x="6" y="2" width="18" height="20" rx="1" fill={c} />}
      {round ? <path d="M13 1a11 11 0 0 1 11 11H13z" fill="#ff8f6b" /> : <rect x="6" y="12" width="18" height="10" fill={dark} />}
      <rect x="0" y="6" width="12" height="12" rx="1" fill={dark} />
      <text x="6" y="16" textAnchor="middle" fontFamily="Liberation Sans, sans-serif" fontWeight="700" fontSize="10" fill="#fff">{t}</text>
    </svg>
  );
}
const XLogo = ({ size }: { size: number }) => (
  <svg width={size} height={size} viewBox="0 0 24 24">
    <rect x="0.500" y="0.500" width="23" height="23" fill="#fff" stroke="#000" />
    <path d="M3 3h7l3 5l2-5h5l-5 9l6 9h-7l-3-6l-3 6H3l6-9z" fill="#000" />
  </svg>
);
const Notepad = () => (
  <svg width="24" height="24" viewBox="0 0 24 24">
    <path d="M8 2l12 2l-5 18L2 18z" fill="#8cc6d4" />
    <path d="M20 4l2 2l-3 16l-4 0z" fill="#d8e4e6" />
    <path d="M8 2l12 2l-1 4L6 6z" fill="#b8e0e8" />
    <path d="M2 18l13 4l-1 1L2 20z" fill="#e8eeee" />
  </svg>
);

const APPS: [string, React.ReactNode][] = [
  ["Start", <svg key="i" width="17" height="17" viewBox="0 0 17 17"><path d="M0 2l7-1v7H0zM8 1l9-1v8H8zM0 9h7v7l-7-1zM8 9h9v8l-9-1z" fill="#fff" /></svg>],
  ["Search", <svg key="i" width="18" height="18" viewBox="0 0 18 18" fill="none" stroke="#fff" strokeWidth="1.500"><circle cx="11" cy="7" r="5" /><path d="M7.500 10.500L1 17" /></svg>],
  ["Mail", <svg key="i" width="24" height="24" viewBox="0 0 24 24" fill="none" stroke="#f0981c" strokeWidth="2"><path d="M4 17a9.500 9.500 0 1 1 8 4H2l3-3M4 8l8 7l9-7" /></svg>],
  ["Edge", <FaEdgeLegacy key="i" size={23} color="#0c7bd8" />],
  ["Chrome", <svg key="i" width="26" height="26" viewBox="0 0 26 26"><circle cx="12" cy="12" r="12" fill="#f8c81c" /><path d="M12 12L1.600 6A12 12 0 0 0 12 24l5-9z" fill="#2ba24c" /><path d="M1.600 6A12 12 0 0 1 22.400 6H12v6z" fill="#e33b2e" /><circle cx="12" cy="12" r="5.500" fill="#fff" /><circle cx="12" cy="12" r="4.500" fill="#3b7de8" /><circle cx="20" cy="18" r="6" fill="#a89c94" /><path d="M17 19h5v7h-4z" fill="#e8c4b4" /></svg>],
  ["Brave", <SiBrave key="i" size={23} color="#fb542b" style={{ background: "radial-gradient(#fff 45%, transparent 48%)" }} />],
  ["Explorer", <svg key="i" width="24" height="24" viewBox="0 0 24 24"><path d="M1 3h8l2 2h12v4H1z" fill="#d8a020" /><rect x="1" y="6" width="22" height="14" fill="#fcd66c" /><path d="M6 21v-7h12v7h-4v-4h-4v4z" fill="#3a98d8" /></svg>],
  ["Notepad", <Notepad key="i" />],
  ["PATrader", <XLogo key="i" size={24} />],
  ["ATR", <svg key="i" width="22" height="22" viewBox="0 0 22 22"><defs><linearGradient id="gr" x2="0" y2="1"><stop stopColor="#bbb" /><stop offset="1" stopColor="#6c6c6c" /></linearGradient></defs><rect x="1" y="1" width="20" height="20" rx="3" fill="url(#gr)" /><text x="11" y="14" textAnchor="middle" fontFamily="Liberation Sans, sans-serif" fontWeight="700" fontSize="7" fill="#555">aTR</text></svg>],
  ["Calculator", <svg key="i" width="20" height="24" viewBox="0 0 20 24"><rect x="1" width="18" height="24" fill="#808890" /><rect x="3" y="2" width="14" height="4" fill="#50d8f0" /><path d="M3 8h4v4H3zM8 8h4v4H8zM13 8h4v4h-4zM3 13h4v4H3zM8 13h4v4H8zM3 18h4v4H3zM8 18h4v4H8z" fill="#e4e8ec" /><rect x="13" y="13" width="4" height="9" fill="#1858a0" /></svg>],
  ["Word", <Office key="i" c="#2b90e0" dark="#1a50b0" t="W" />],
  ["Excel", <Office key="i" c="#24a468" dark="#107040" t="X" />],
  ["PowerPoint", <Office key="i" c="#e06038" dark="#c0391c" t="P" round />],
  ["CuteFTP", <svg key="i" width="24" height="24" viewBox="0 0 24 24"><rect width="24" height="24" fill="#f8fcf4" /><rect y="21" width="24" height="3" fill="#70c040" /><path d="M1 7q6-5 12-2t10-2v4q-8 3-12 1T1 11z" fill="#4898d8" /><text x="13" y="19" textAnchor="middle" fontFamily="Liberation Sans, sans-serif" fontWeight="700" fontSize="9" fill="#50a828">FTP</text></svg>],
  ["Snagit", <Square key="i" c="#f8584c" c2="#e84038" t="S" />],
  ["Snagit Editor", <Square key="i" c="#4898d0" c2="#3078b8" t="S" />],
  ["Notes", <svg key="i" width="24" height="24" viewBox="0 0 24 24"><ellipse cx="12" cy="12" rx="11" ry="12" fill="#98c818" /><path d="M7 21V6M7 5l9 14M17 3v15" stroke="#283010" strokeWidth="3" fill="none" /></svg>],
  ["Red bird", <svg key="i" width="24" height="24" viewBox="0 0 24 24"><path d="M1 7l8 2l5 4l2-4l8-3l-4 8l-4 4l-2 3l-7-3z" fill="#e8201c" /></svg>],
  ["Sticky Notes", <svg key="i" width="24" height="24" viewBox="0 0 24 24"><rect width="24" height="24" rx="1" fill="#fcd420" /><path d="M11 15h13l-9 9z" fill="#403828" /><path d="M15 24l9-9v9z" fill="#e0a810" /></svg>],
  ["Control Panel", <svg key="i" width="22" height="22" viewBox="0 0 22 22"><rect y="2" width="22" height="18" rx="1" fill="#9cdcf8" /><circle cx="7" cy="9" r="4" fill="#2878c8" /><path d="M7 9V5a4 4 0 0 1 4 4z" fill="#f8b030" /><path d="M13 6h6M13 9h6M4 16h6M13 14h6M13 17h4" stroke="#2878c8" strokeWidth="2" /></svg>],
  ["Camtasia", <Camtasia key="i" c="#fc7060" c2="#f04838" />],
  ["Camtasia Recorder", <Camtasia key="i" c="#60b418" c2="#409008" />],
  ["Quotes", <svg key="i" width="24" height="24" viewBox="0 0 24 24"><rect width="24" height="24" rx="6" fill="#303868" /><path d="M8 7h4l-2 6H7zM14 7h4l-2 6h-3z" fill="#fff" /></svg>],
  ["Telegram", <FaTelegram key="i" size={22} color="#28a0dc" style={{ background: "#fff", borderRadius: 12 }} />],
  ["Zoom", <svg key="i" width="24" height="24" viewBox="0 0 24 24"><rect width="24" height="24" rx="11" fill="#1060f8" /><path d="M6 5h12v3l-7 8h7v3H6v-3l7-8H6z" fill="#fff" /></svg>],
  ["Updater", <svg key="i" width="24" height="24" viewBox="0 0 24 24"><circle cx="12" cy="12" r="11" fill="#200808" stroke="#c81c24" /><circle cx="11" cy="13" r="4" fill="none" stroke="#f02830" strokeWidth="2.500" strokeDasharray="3 1" /><path d="M17 17V7M14 10l3-4l3 4" stroke="#f02830" strokeWidth="2" fill="none" /></svg>],
  ["Recorder", <svg key="i" width="24" height="24" viewBox="0 0 24 24"><defs><linearGradient id="ring" x2="0" y2="1"><stop stopColor="#f8a060" /><stop offset="1" stopColor="#8868c8" /></linearGradient></defs><circle cx="12" cy="12" r="10.500" fill="#383838" stroke="url(#ring)" strokeWidth="2.500" /><circle cx="12" cy="12" r="4" fill="#fff" /><circle cx="12" cy="12" r="1.500" fill="#333" /></svg>],
  ["Notepad window", <Notepad key="i" />],
];
const OPEN = [2, 4, 11, 27, 28];

const MENUS = ["Page", "View", "Actions", "Charts", "Quotes", "System", "Tools", "Window", "Help"];
const PERIODS = ["1m", "3m", "5m", "10m", "15m", "30m", "60m", "240", "360"];
const PAGES = ["NZD RF6", "GBPJPY RF6", "EURJPY RF6", "AUD RF6", "JPY RF6", "CHF RF6", "CAD RF6", "GBPUSD", "EUR RF6", "AUDJPY RF6", "EURGBP RF6", "EURAUD RF6", "CADJPY RF6", "GBPAUD RF6", "EURNZD RF6", "GBPNZD RF6", "NZDJPY RF6", "AUDCHF RF6", "GBPCHF RF6", "AUDNZD RF6", "USDX XAU WTI", "QL-Majors", "QL-Exotics", "USDX RF6", "Bitcoin", "SP500", "DJIA"];

/* Mouse pointer resting over the title bar */
const Cursor = styled.svg`
  position: absolute;
  left: 722px;
  top: 13px;
`;

export default function App() {
  return (
    <Screen>
      <GlobalStyle />
      <TitleBar>
        <XLogo size={16} />
        <Title>PATrader - JPY RF6 - [USDJPY.F, 240 min - [FXCM] US Dollar vs Japanese Yen]</Title>
        <WindowButtons>
          <WindowButton aria-label="Minimize"><svg width="10" height="10"><path d="M0 5.500h10" stroke="#000" /></svg></WindowButton>
          <WindowButton aria-label="Restore"><svg width="10" height="10" fill="none" stroke="#000"><path d="M.5 2.500h7v7h-7zM2.500 2V.5h7v7H8" /></svg></WindowButton>
          <WindowButton aria-label="Close"><svg width="10" height="10"><path d="M0 0l10 10M10 0L0 10" stroke="#000" /></svg></WindowButton>
        </WindowButtons>
      </TitleBar>
      <Cursor width="19" height="30" viewBox="0 0 19 30" aria-hidden="true">
        <path d="M1.500 1.500v23l5.500-5l4 9l4-2l-4-8.500h7z" fill="#fff" stroke="#222" />
      </Cursor>
      <MenuBar>
        <Grip />
        <MenuIcon width="16" height="16" viewBox="0 0 16 16">
          <rect width="16" height="16" fill="#c4c4c4" />
          <path d="M.5 0v14.500H16" stroke="#20a040" fill="none" strokeWidth="2" />
          <path d="M2 11l3-5l2 3l4-3l4-4" stroke="#000" fill="none" strokeWidth="1.500" />
        </MenuIcon>
        {MENUS.map((m) => <MenuItem key={m}>{m}</MenuItem>)}
        <Spacer />
        <ChildButton aria-label="Minimize chart"><svg width="8" height="8"><path d="M1 5h6" stroke="#888" strokeWidth="2" /></svg></ChildButton>
        <ChildButton aria-label="Restore chart"><svg width="8" height="8" fill="none" stroke="#77808c"><path d="M.5 3.500h5v4h-5zM2.500 3V.5h5v4H6M2 1h6" /></svg></ChildButton>
        <ChildButton aria-label="Close chart"><svg width="8" height="8"><path d="M1 1l6 6M7 1L1 7" stroke="#667" strokeWidth="2" /></svg></ChildButton>
      </MenuBar>
      <ToolBar>
        <Grip />
        {CHART_TYPES.map(([n, g]) => (
          <Tool key={n} aria-label={n}>
            <Glyph>
              {g}
              {n === "Point and figure" && <path d="M7.500 4.500h3v3h-3zM7.500 10.500h3v3h-3z" stroke="#e02030" />}
            </Glyph>
          </Tool>
        ))}
      </ToolBar>
      <ToolBar $last>
        <Grip />
        <Tool aria-label="Compress"><Stretch /></Tool>
        <Tool aria-label="Expand"><Stretch plus /></Tool>
        <Divider />
        <Tool aria-label="Indicators">
          <Glyph><path d="M2 14V9h2v5zM5 14V7h2v7zM8 14V4h2v10z" fill="#20e030" stroke="none" /><path d="M11 14V4h2v10z" fill="#e02020" stroke="none" /><path d="M1 13L11 2l4 5v7" shapeRendering="auto" /></Glyph>
        </Tool>
        <Divider />
        <Tool aria-label="Crosshair"><Glyph axes={false}><path d="M8.500 2v13M2 8.500h13" /></Glyph></Tool>
        <Divider />
        <Tool aria-label="Pointer"><Glyph axes={false}><path d="M5.500 2v11l3-3l2 4l2-1l-2-4h4z" fill="#fff" shapeRendering="auto" /></Glyph></Tool>
        {DRAWING_TOOLS.map(([n, g]) => <Tool key={n} aria-label={n} $on={n === "Supply zone"}><Glyph>{g}</Glyph></Tool>)}
        <More aria-label="More tools">»</More>
        <ToolEnd />
        <Grip />
        {PERIODS.map((p) => <Period key={p}>{p}</Period>)}
        <Divider />
        {["D", "W", "M"].map((p) => <Period key={p}>{p}</Period>)}
        <Divider />
        <Tool aria-label="Session time"><svg width="14" height="14" fill="none" stroke="#000" strokeWidth="2"><circle cx="7" cy="7" r="5" /><path d="M7 4v3h3" /></svg></Tool>
      </ToolBar>
      <ChartRow>
        <Panes>
          <PricePane />
          <MacdPane />
          <InfoBox>
            <InfoDate>08/06/2023 03:00</InfoDate>
            <InfoLine>Open: 139.73</InfoLine>
            <InfoLine>High: 139.86</InfoLine>
            <InfoLine>Low: 139.63</InfoLine>
            <InfoLine>Close: 139.69</InfoLine>
            <InfoLine>Vol.: 19085</InfoLine>
          </InfoBox>
          <MacdTag>MACD</MacdTag>
        </Panes>
        <AxisColumn><Axis /></AxisColumn>
      </ChartRow>
      <TabBar>
        {PAGES.map((p, i) => (
          <React.Fragment key={p}>
            <Tab $on={i === 4}>{p}</Tab>
            <TabRule $hide={i === 3 || i === 4} />
          </React.Fragment>
        ))}
        <TabScroll aria-label="Scroll tabs left"><svg width="6" height="9" fill="#fff" stroke="#222"><path d="M5 1L1 4.500L5 8z" /></svg></TabScroll>
        <TabScroll aria-label="Scroll tabs right"><svg width="6" height="9" fill="#fff" stroke="#222"><path d="M1 1l4 3.500L1 8z" /></svg></TabScroll>
      </TabBar>
      <StatusBar>
        <StatusCell $plain>Ready</StatusCell>
        <StatusCell $w={133} $center>
          <svg width="13" height="11" fill="#e8e8e8" stroke="#888"><path d="M.5.5h12v10H.5zM1 1l5.500 5L12 1M1 10l4-4M12 10L8 6" /></svg>
          0 message(s)
        </StatusCell>
        <StatusCell $w={179}>Sent: 1138 Kb/Recv: 71490 Kb</StatusCell>
        <StatusCell $w={130}>Connected/17 ms</StatusCell>
        <StatusCell $w={21} $plain>
          <svg width="16" height="16" style={{ flex: "none" }}><rect width="16" height="16" /><circle cx="8" cy="8" r="6" fill="#0a8010" /></svg>
        </StatusCell>
        <StatusCell $w={123} $plain>01/07/2023 12:42 GMT</StatusCell>
        <StatusCell $w={145}>01/07/2023 07:42:23 Local</StatusCell>
        <StatusCell $w={40} $plain>
          <svg width="17" height="17" fill="none" stroke="#ccc"><rect width="17" height="17" fill="#000" stroke="none" /><path d="M8.500 2l6 12h-12zM8.500 6v4M8.500 11.500v1" /></svg>
        </StatusCell>
      </StatusBar>
      <TaskBar>
        {APPS.map(([n, icon], i) => (
          <Task key={n} aria-label={n} $active={i === 8} $open={OPEN.includes(i)}>{icon}</Task>
        ))}
        <Clock><span>7:42 AM</span><span>7/1/2023</span></Clock>
      </TaskBar>
    </Screen>
  );
}
